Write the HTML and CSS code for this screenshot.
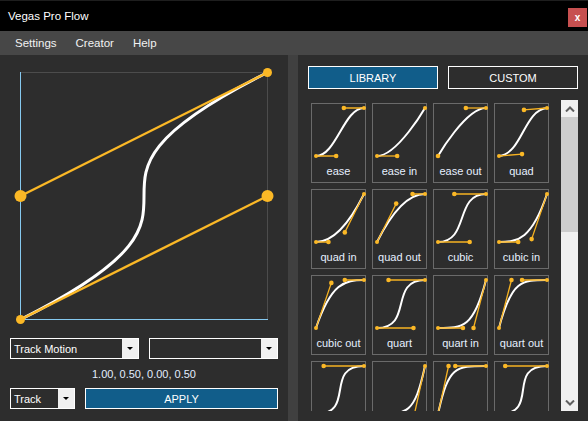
FILE: index.html
```html
<!DOCTYPE html>
<html>
<head>
<meta charset="utf-8">
<link rel="stylesheet" href="styles.css">
</head>
<body>
<div class="window">
  <div class="titlebar">
    <span class="title">Vegas Pro Flow</span>
    <div class="close">x</div>
  </div>
  <div class="menubar">
    <span>Settings</span><span>Creator</span><span>Help</span>
  </div>
  <div class="main">
    <div class="left">
      <svg class="editor" viewBox="0 0 268 283">
        <line class="grid-line" x1="10.5" y1="17.5" x2="257.5" y2="17.5"/>
        <line class="grid-line" x1="257.5" y1="17.5" x2="257.5" y2="264.5"/>
        <line class="axis" x1="10.5" y1="17" x2="10.5" y2="265"/>
        <line class="axis" x1="10" y1="264.5" x2="258" y2="264.5"/>
        <path class="curve" d="M10.5 264.5 C257.5 141 10.5 141 257.5 17.5"/>
        <line class="handle" x1="10.5" y1="264.5" x2="257.5" y2="141"/>
        <line class="handle" x1="257.5" y1="17.5" x2="10.5" y2="141"/>
        <circle class="dot" cx="10.5" cy="264.5" r="4.5"/>
        <circle class="dot" cx="257.5" cy="17.5" r="4.5"/>
        <circle class="dot" cx="10.5" cy="141" r="6"/>
        <circle class="dot" cx="257.5" cy="141" r="6"/>
      </svg>
      <div class="row">
        <div class="combo wide"><span>Track Motion</span><span class="arrow"></span></div>
        <div class="combo wide"><span></span><span class="arrow"></span></div>
      </div>
      <div class="values">1.00, 0.50, 0.00, 0.50</div>
      <div class="row">
        <div class="combo short"><span>Track</span><span class="arrow"></span></div>
        <button class="apply">APPLY</button>
      </div>
    </div>
    <div class="divider"></div>
    <div class="right">
      <div class="tabs">
        <button class="tab active">LIBRARY</button>
        <button class="tab">CUSTOM</button>
      </div>
      <div class="list">
        <div class="grid">
          <div class="tile"><svg viewBox="0 0 53 53"><path class="c" d="M4 52C24.16 52 31.84 4 52 4"/><path class="h" d="M4 52L24.16 52M52 4L31.84 4"/><circle cx="4" cy="52" r="2"/><circle cx="52" cy="4" r="2"/><circle cx="24.16" cy="52" r="2.3"/><circle cx="31.84" cy="4" r="2.3"/></svg><div class="label">ease</div></div>
          <div class="tile"><svg viewBox="0 0 53 53"><path class="c" d="M4 52C24.16 52 52 4 52 4"/><path class="h" d="M4 52L24.16 52"/><circle cx="4" cy="52" r="2"/><circle cx="52" cy="4" r="2"/><circle cx="24.16" cy="52" r="2.3"/></svg><div class="label">ease in</div></div>
          <div class="tile"><svg viewBox="0 0 53 53"><path class="c" d="M4 52C4 52 31.84 4 52 4"/><path class="h" d="M52 4L31.84 4"/><circle cx="4" cy="52" r="2.3"/><circle cx="52" cy="4" r="2"/><circle cx="31.84" cy="4" r="2.3"/></svg><div class="label">ease out</div></div>
          <div class="tile"><svg viewBox="0 0 53 53"><path class="c" d="M4 52C27.04 50.08 28.96 5.92 52 4"/><path class="h" d="M4 52L27.04 50.08M52 4L28.96 5.92"/><circle cx="4" cy="52" r="2"/><circle cx="52" cy="4" r="2"/><circle cx="27.04" cy="50.08" r="2.3"/><circle cx="28.96" cy="5.92" r="2.3"/></svg><div class="label">quad</div></div>

          <div class="tile"><svg viewBox="0 0 53 53"><path class="c" d="M4 52C16.48 52 32.8 42.4 52 4"/><path class="h" d="M4 52L16.48 52M52 4L32.8 42.4"/><circle cx="4" cy="52" r="2"/><circle cx="52" cy="4" r="2"/><circle cx="16.48" cy="52" r="2.3"/><circle cx="32.8" cy="42.4" r="2.3"/></svg><div class="label">quad in</div></div>
          <div class="tile"><svg viewBox="0 0 53 53"><path class="c" d="M4 52C23.2 13.6 39.52 4 52 4"/><path class="h" d="M4 52L23.2 13.6M52 4L39.52 4"/><circle cx="4" cy="52" r="2"/><circle cx="52" cy="4" r="2"/><circle cx="23.2" cy="13.6" r="2.3"/><circle cx="39.52" cy="4" r="2.3"/></svg><div class="label">quad out</div></div>
          <div class="tile"><svg viewBox="0 0 53 53"><path class="c" d="M4 52C35.68 52 20.32 4 52 4"/><path class="h" d="M4 52L35.68 52M52 4L20.32 4"/><circle cx="4" cy="52" r="2"/><circle cx="52" cy="4" r="2"/><circle cx="35.68" cy="52" r="2.3"/><circle cx="20.32" cy="4" r="2.3"/></svg><div class="label">cubic</div></div>
          <div class="tile"><svg viewBox="0 0 53 53"><path class="c" d="M4 52C23.2 52 36.64 49.12 52 4"/><path class="h" d="M4 52L23.2 52M52 4L36.64 49.12"/><circle cx="4" cy="52" r="2"/><circle cx="52" cy="4" r="2"/><circle cx="23.2" cy="52" r="2.3"/><circle cx="36.64" cy="49.12" r="2.3"/></svg><div class="label">cubic in</div></div>

          <div class="tile"><svg viewBox="0 0 53 53"><path class="c" d="M4 52C19.36 6.88 32.8 4 52 4"/><path class="h" d="M4 52L19.36 6.88M52 4L32.8 4"/><circle cx="4" cy="52" r="2"/><circle cx="52" cy="4" r="2"/><circle cx="19.36" cy="6.88" r="2.3"/><circle cx="32.8" cy="4" r="2.3"/></svg><div class="label">cubic out</div></div>
          <div class="tile"><svg viewBox="0 0 53 53"><path class="c" d="M4 52C40.48 52 15.52 4 52 4"/><path class="h" d="M4 52L40.48 52M52 4L15.52 4"/><circle cx="4" cy="52" r="2"/><circle cx="52" cy="4" r="2"/><circle cx="40.48" cy="52" r="2.3"/><circle cx="15.52" cy="4" r="2.3"/></svg><div class="label">quart</div></div>
          <div class="tile"><svg viewBox="0 0 53 53"><path class="c" d="M4 52C28.96 52 39.52 52 52 4"/><path class="h" d="M4 52L28.96 52M52 4L39.52 52"/><circle cx="4" cy="52" r="2"/><circle cx="52" cy="4" r="2"/><circle cx="28.96" cy="52" r="2.3"/><circle cx="39.52" cy="52" r="2.3"/></svg><div class="label">quart in</div></div>
          <div class="tile"><svg viewBox="0 0 53 53"><path class="c" d="M4 52C16.48 4 27.04 4 52 4"/><path class="h" d="M4 52L16.48 4M52 4L27.04 4"/><circle cx="4" cy="52" r="2"/><circle cx="52" cy="4" r="2"/><circle cx="16.48" cy="4" r="2.3"/><circle cx="27.04" cy="4" r="2.3"/></svg><div class="label">quart out</div></div>

          <div class="tile"><svg viewBox="0 0 53 53"><path class="c" d="M4 52C44.32 52 11.68 4 52 4"/><path class="h" d="M4 52L44.32 52M52 4L11.68 4"/><circle cx="4" cy="52" r="2"/><circle cx="52" cy="4" r="2"/><circle cx="44.32" cy="52" r="2.3"/><circle cx="11.68" cy="4" r="2.3"/></svg></div>
          <div class="tile"><svg viewBox="0 0 53 53"><path class="c" d="M4 52C34.72 52 41.44 52 52 4"/><path class="h" d="M4 52L34.72 52M52 4L41.44 52"/><circle cx="4" cy="52" r="2"/><circle cx="52" cy="4" r="2"/><circle cx="34.72" cy="52" r="2.3"/><circle cx="41.44" cy="52" r="2.3"/></svg></div>
          <div class="tile"><svg viewBox="0 0 53 53"><path class="c" d="M4 52C14.56 4 21.28 4 52 4"/><path class="h" d="M4 52L14.56 4M52 4L21.28 4"/><circle cx="4" cy="52" r="2"/><circle cx="52" cy="4" r="2"/><circle cx="14.56" cy="4" r="2.3"/><circle cx="21.28" cy="4" r="2.3"/></svg></div>
          <div class="tile"><svg viewBox="0 0 53 53"><path class="c" d="M4 52C45.76 52 10.24 4 52 4"/><path class="h" d="M4 52L45.76 52M52 4L10.24 4"/><circle cx="4" cy="52" r="2"/><circle cx="52" cy="4" r="2"/><circle cx="45.76" cy="52" r="2.3"/><circle cx="10.24" cy="4" r="2.3"/></svg></div>
        </div>
        <div class="scrollbar">
          <div class="sb-btn"><svg width="10" height="6" viewBox="0 0 10 6"><polyline points="1,5.5 5,1.5 9,5.5" class="chev"/></svg></div>
          <div class="sb-thumb"></div>
          <div class="sb-track"></div>
          <div class="sb-btn"><svg width="10" height="6" viewBox="0 0 10 6"><polyline points="1,0.5 5,4.5 9,0.5" class="chev"/></svg></div>
        </div>
      </div>
    </div>
  </div>
</div>
</body>
</html>
```
FILE: styles.css
```css
html, body {
  margin: 0;
  padding: 0;
}
body {
  width: 588px;
  height: 421px;
  overflow: hidden;
  background: #2d2d2d;
  font-family: "Liberation Sans", Arial, sans-serif;
}
.window {
  display: flex;
  flex-direction: column;
  height: 421px;
}
.titlebar {
  height: 31px;
  box-sizing: border-box;
  background: #000;
  border-top: 1px solid #1e1e1e;
  display: flex;
  align-items: center;
  justify-content: space-between;
  padding: 0 1px 0 8px;
}
.title {
  color: #fff;
  font-size: 11.5px;
}
.close {
  align-self: flex-start;
  margin-top: 7px;
  width: 19px;
  height: 19px;
  background: #c75050;
  color: #fff;
  font-size: 10px;
  font-weight: bold;
  display: flex;
  align-items: center;
  justify-content: center;
  line-height: 1;
}
.menubar {
  height: 24px;
  background: #474747;
  display: flex;
  align-items: center;
  padding-left: 15px;
  gap: 19px;
  color: #f2f2f2;
  font-size: 11.5px;
}
.main {
  flex: 1;
  display: flex;
}
.left {
  width: 288px;
  box-sizing: border-box;
  padding: 0 10px;
  display: flex;
  flex-direction: column;
}
.editor {
  display: block;
  width: 268px;
  height: 283px;
}
.grid-line {
  stroke: #4c4c4c;
  stroke-width: 1;
}
.axis {
  stroke: #86c9ef;
  stroke-width: 1;
}
.curve {
  fill: none;
  stroke: #fff;
  stroke-width: 3;
}
.handle {
  stroke: #fbb826;
  stroke-width: 2.4;
}
.dot {
  fill: #fbb826;
}
.row {
  display: flex;
  gap: 10px;
  height: 21px;
}
.combo {
  box-sizing: border-box;
  height: 21px;
  border: 1px solid #fff;
  display: flex;
  align-items: center;
  justify-content: space-between;
  color: #fff;
  font-size: 11px;
  padding-left: 3px;
}
.combo.wide {
  width: 129px;
}
.combo.short {
  width: 65px;
}
.arrow {
  width: 16px;
  align-self: stretch;
  background: #f0f0f0;
  display: flex;
  align-items: center;
  justify-content: center;
}
.arrow::after {
  content: "";
  border-left: 3px solid transparent;
  border-right: 3px solid transparent;
  border-top: 3px solid #000;
}
.values {
  height: 29px;
  display: flex;
  align-items: center;
  justify-content: center;
  color: #e2eeff;
  font-size: 11px;
}
.apply {
  width: 193px;
  height: 21px;
  box-sizing: border-box;
  margin: 0;
  padding: 0;
  background: #115d8a;
  border: 1px solid #fff;
  color: #fff;
  font-family: "Liberation Sans", Arial, sans-serif;
  font-size: 11px;
}
.divider {
  width: 10px;
  background: #404040;
}
.right {
  flex: 1;
  box-sizing: border-box;
  padding: 11px 10px 0 10px;
  display: flex;
  flex-direction: column;
}
.tabs {
  display: flex;
  gap: 10px;
  height: 23px;
}
.tab {
  width: 130px;
  height: 23px;
  box-sizing: border-box;
  margin: 0;
  padding: 0;
  border: 1px solid #fff;
  background: #2d2d2d;
  color: #fff;
  font-family: "Liberation Sans", Arial, sans-serif;
  font-size: 11px;
}
.tab.active {
  background: #115d8a;
}
.list {
  margin-top: 11px;
  height: 311px;
  display: flex;
}
.grid {
  flex: 1;
  padding: 3px 0 0 3px;
  overflow: hidden;
  display: grid;
  grid-template-columns: repeat(4, 55px);
  grid-auto-rows: 80px;
  column-gap: 6px;
  row-gap: 6px;
  align-content: start;
}
.tile {
  box-sizing: border-box;
  width: 55px;
  height: 80px;
  border: 1px solid #6a6a6a;
}
.tile svg {
  display: block;
  width: 53px;
  height: 53px;
  overflow: visible;
}
.tile .c {
  fill: none;
  stroke: #fff;
  stroke-width: 2;
}
.tile .h {
  fill: none;
  stroke: #f6b222;
  stroke-width: 1.3;
}
.tile circle {
  fill: #fbb826;
}
.label {
  margin-top: 6px;
  line-height: 16px;
  text-align: center;
  font-size: 11px;
  color: #e6f0ff;
  white-space: nowrap;
}
.scrollbar {
  width: 17px;
  background: #f0f0f0;
  display: flex;
  flex-direction: column;
}
.sb-btn {
  height: 17px;
  display: flex;
  align-items: center;
  justify-content: center;
}
.chev {
  fill: none;
  stroke: #606060;
  stroke-width: 2;
}
.sb-thumb {
  height: 115px;
  background: #cdcdcd;
}
.sb-track {
  flex: 1;
}
```
